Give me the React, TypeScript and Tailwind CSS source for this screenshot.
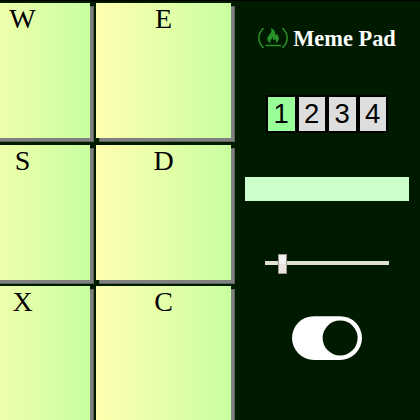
import { BsToggleOn } from 'react-icons/bs';

const pads = ['W', 'E', 'S', 'D', 'X', 'C'];
const banks = [1, 2, 3, 4];

function FlameLogo() {
  return (
    <svg viewBox="0 0 30 20" className="-mt-px h-5 w-[30px] text-[#279327]" fill="none" stroke="currentColor">
      <path d="M5.2 .5C-.6 6 -.6 14 5.2 19.5M24.8 .5C30.6 6 30.6 14 24.8 19.5" strokeWidth="1.5" strokeLinecap="round" />
      <path d="M8 17.5H22.8" strokeWidth="1.3" strokeLinecap="round" />
      <path
        d="M12.6 .3C16.6 1.2 17.3 4 17.2 6.1C17.2 7.4 18.8 7.5 18.7 5.5C21.4 8.5 22.2 13 17.2 15.2C18.8 13.1 18 11.8 16.7 11.1C16.9 12.3 15.5 12.4 15.1 11.4C14.8 10.6 15.3 9.8 14.8 9C14.7 11 12.2 11.6 12.3 13.3C12.4 14.3 12.8 14.9 13.3 15.3C8.4 13.8 8.5 9.7 11 7.2C12.9 5.2 14.3 3 12.6 .3Z"
        fill="currentColor"
        stroke="none"
      />
    </svg>
  );
}

function Pad({ label }: { label: string }) {
  return (
    <div className="h-[135px] w-[135px] bg-linear-to-r from-[#ffffb0] to-[#c8ffa0] text-center text-[28px] leading-[32px] text-black shadow-[3.5px_3.5px_0_-0.5px_#808080,3.5px_3.5px_0_0.5px_#5c665c]">
      {label}
    </div>
  );
}

export default function App() {
  return (
    <div className="flex h-[420px] w-[420px] overflow-hidden border-t border-black bg-[#001a00] font-['Liberation_Serif',serif]">
      <div className="-ml-[45px] grid shrink-0 auto-rows-[135px] grid-cols-[135px_135px] gap-x-[6px] gap-y-[6.6px] pt-[2px]">
        {pads.map((p) => (
          <Pad key={p} label={p} />
        ))}
      </div>
      <div className="ml-[14px] flex w-[164px] shrink-0 flex-col items-center">
        <div className="mt-[23px] flex h-[29px] items-center gap-[5px]">
          <FlameLogo />
          <span className="text-[22.4px] font-bold leading-[29px] text-white">Meme Pad</span>
        </div>
        <div className="mt-[42px] flex h-[38px] gap-[4px] bg-black p-[2px] font-['Liberation_Sans',sans-serif]">
          {banks.map((n) => (
            <div
              key={n}
              className={`flex h-[34px] w-[26.5px] items-center justify-center text-[27.5px] leading-none text-black ${n === 1 ? 'bg-[#99ff99]' : 'bg-[#dddddd]'}`}
            >
              {n}
            </div>
          ))}
        </div>
        <div className="mt-[44px] h-6 w-[164px] bg-[#ccffcc]" />
        <div className="mt-[53px] flex h-5 w-[124px] items-center bg-[linear-gradient(#e0e0d1,#e0e0d1)] bg-[length:100%_4px] bg-[position:0_7px] bg-no-repeat">
          <div className="ml-[13px] h-5 w-[9px] border border-[#9b978c] bg-linear-to-b from-[#f5f3f2] from-50% to-[#ebe5e2] to-50%" />
        </div>
        <BsToggleOn className="mt-[29px] h-[70px] w-[70px] text-white" />
      </div>
    </div>
  );
}
